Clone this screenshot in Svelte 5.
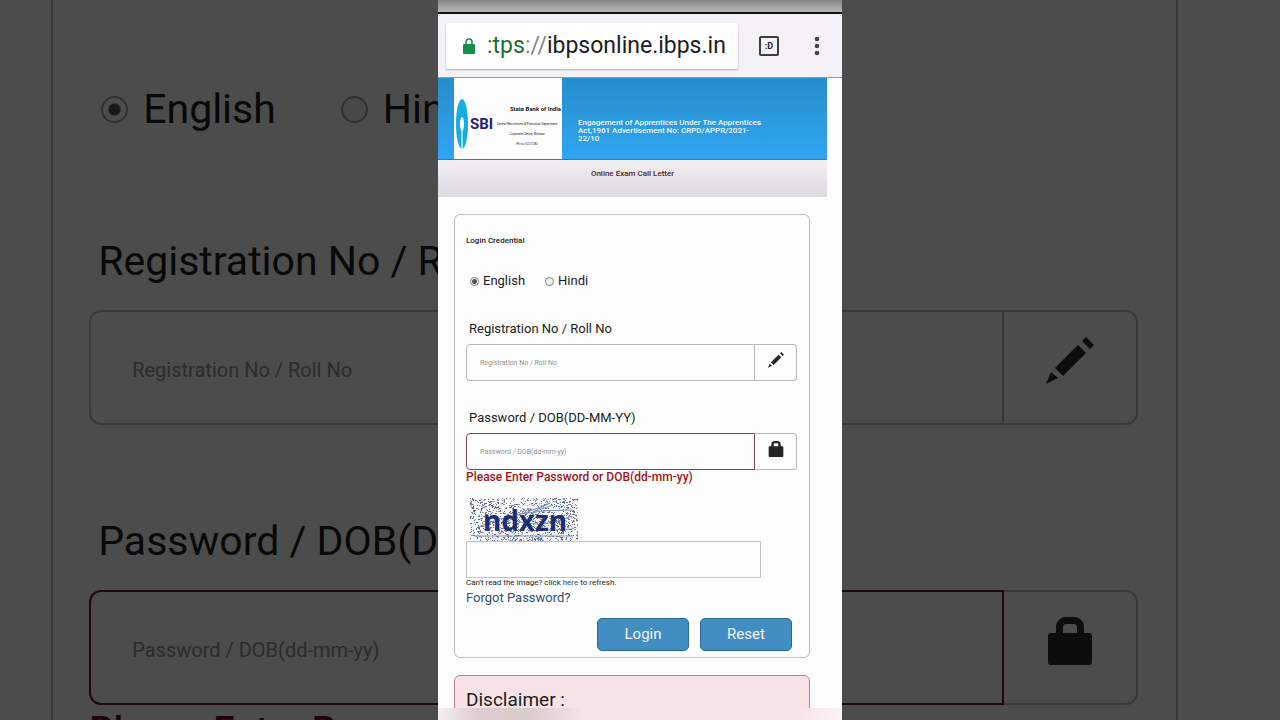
<script lang="ts">
	let language = $state('english');
	let backdropLanguage = $state('english');

	const fields = [
		{ id: 'reg', label: 'Registration No / Roll No', placeholder: 'Registration No / Roll No', icon: 'pencil', error: '' },
		{
			id: 'pass',
			label: 'Password / DOB(DD-MM-YY)',
			placeholder: 'Password / DOB(dd-mm-yy)',
			icon: 'lock',
			error: 'Please Enter Password or DOB(dd-mm-yy)'
		}
	];

	// captcha speckle, seeded so it is stable between renders
	let seed = 11;
	function rand() {
		seed = (seed * 16807) % 2147483647;
		return seed / 2147483647;
	}
	const shades = ['#5a658f', '#7c86a9', '#9aa1bd', '#6c7083'];
	const specks = Array.from({ length: 1100 }, () => ({
		x: Math.floor(rand() * 108),
		y: Math.floor(rand() * 43),
		w: rand() > 0.8 ? 2 : 1,
		fill: shades[Math.floor(rand() * 4)]
	}));
</script>

<svelte:head>
	<title>Online Exam Call Letter</title>
</svelte:head>

{#snippet icon(name: string)}
	{#if name === 'pencil'}
		<svg class="icon" viewBox="0 0 48 48" aria-hidden="true">
			<path d="M0 47 5 35 12 41zM9 31 32 8l8 8-23 23zM36 4l4-4 8 8-4 4z" />
		</svg>
	{:else}
		<svg class="icon" viewBox="0 0 48 48" aria-hidden="true">
			<path
				fill-rule="evenodd"
				d="M10 16V9q0-3 2-5l2-2q2-2 5-2h10q3 0 5 2l2 2q2 2 2 5v7h5q3 0 3 3v26q0 3-3 3H5q-3 0-3-3V19q0-3 3-3zM17 16h14v-5q0-4-3-4h-8q-3 0-3 4z"
			/>
		</svg>
	{/if}
{/snippet}

{#snippet fieldGroup(prefix: string)}
	{#each fields as field (field.id)}
		<div class="field" class:invalid={field.error}>
			<label for={prefix + field.id}>{field.label}</label>
			<div class="input-group">
				<input id={prefix + field.id} type="text" placeholder={field.placeholder} />
				<span class="addon">{@render icon(field.icon)}</span>
			</div>
			{#if field.error}
				<p class="error">{field.error}</p>
			{/if}
		</div>
	{/each}
{/snippet}

<div class="stage">
	<div class="backdrop" inert>
		<div class="backdrop-panel">
			<div class="languages">
				<label><input type="radio" name="bg-lang" value="english" bind:group={backdropLanguage} />English</label>
				<label><input type="radio" name="bg-lang" value="hindi" bind:group={backdropLanguage} />Hindi</label>
			</div>
			{@render fieldGroup('bg-')}
		</div>
	</div>

	<main class="phone">
		<div class="status"></div>
		<div class="toolbar">
			<div class="address">
				<svg class="secure" viewBox="0 0 12 16" aria-hidden="true">
					<path d="M3 7V4a3 3 0 0 1 6 0v3" fill="none" stroke="#12904a" stroke-width="1.5" />
					<rect y="6" width="12" height="10" rx="1" fill="#12904a" />
				</svg>
				<span class="url"><span class="scheme">:tps</span><span class="slashes">://</span>ibpsonline.ibps.in</span>
			</div>
			<button class="tabs" aria-label="Open tabs">:D</button>
			<button class="more" aria-label="More options">
				<svg viewBox="0 0 6 20" aria-hidden="true">
					<circle cx="3" cy="3" r="2.3" /><circle cx="3" cy="10" r="2.3" /><circle cx="3" cy="17" r="2.3" />
				</svg>
			</button>
		</div>

		<header class="banner">
			<div class="logo">
				<svg class="emblem" viewBox="0 0 12 50" aria-hidden="true">
					<ellipse cx="6" cy="25" rx="6" ry="25" fill="#16aee0" />
					<ellipse cx="6" cy="25" rx="2" ry="7" fill="#fff" />
					<path d="M5.4 25h1.2v25H5.4z" fill="#fff" />
				</svg>
				<span class="sbi">SBI</span>
				<div class="bank">
					<strong>State Bank of India</strong>
					<span>Central Recruitment &amp; Promotion Department</span>
					<span>Corporate Centre, Mumbai</span>
					<span>Ph no: 022-2282</span>
				</div>
			</div>
			<h1>Engagement of Apprentices Under The Apprentices Act,1961 Advertisement No: CRPD/APPR/2021-22/10</h1>
		</header>
		<h2>Online Exam Call Letter</h2>

		<form class="panel" onsubmit={(e) => e.preventDefault()}>
			<h3>Login Credential</h3>
			<div class="languages">
				<label><input type="radio" name="lang" value="english" bind:group={language} />English</label>
				<label><input type="radio" name="lang" value="hindi" bind:group={language} />Hindi</label>
			</div>
			{@render fieldGroup('')}
			<svg class="captcha" viewBox="0 0 108 43" role="img" aria-label="Captcha">
				<rect width="108" height="43" fill="#f8f8fb" />
				{#each specks as s}
					<rect x={s.x} y={s.y} width={s.w} height="1" fill={s.fill} />
				{/each}
				<path
					d="M4 38h99M55 15l25-10-17 9 20-7M8 29q40-18 95-17M58 33l45-2M40 21q30 12 62-3"
					fill="none"
					stroke="#7c90bd"
					stroke-width="1"
				/>
				<text x="55" y="33" text-anchor="middle">ndxzn</text>
			</svg>
			<input class="captcha-input" type="text" aria-label="Enter the characters in the image" />
			<p class="hint">Can't read the image? click <a href="#refresh">here</a> to refresh.</p>
			<a class="forgot" href="#forgot">Forgot Password?</a>
			<div class="actions">
				<button type="submit">Login</button>
				<button type="reset">Reset</button>
			</div>
		</form>

		<section class="disclaimer">
			<h2>Disclaimer :</h2>
		</section>
		<div class="page-edge"></div>
	</main>
</div>

<style>
	:global(body) {
		background: #4c4c4c;
		font-family: Roboto, 'Liberation Sans', sans-serif;
	}

	.stage,
	.stage * {
		box-sizing: border-box;
	}

	.stage {
		position: relative;
		height: 100vh;
		overflow: hidden;
	}

	h1,
	h2,
	h3,
	p {
		margin: 0;
	}

	button,
	input {
		font-family: inherit;
	}

	.icon {
		display: block;
		width: 16px;
		height: 16px;
		fill: #252525;
	}

	/* shared form pieces */
	.languages {
		display: flex;
		gap: 20px;
		margin: 27px 0 32px 4px;
		font-size: 13px;
		line-height: 16px;
	}

	.languages label {
		display: flex;
		align-items: center;
		gap: 4px;
	}

	.languages input {
		appearance: none;
		width: 9px;
		height: 9px;
		margin: 0;
		border: 1px solid #858585;
		border-radius: 50%;
		background: #eeeef0;
	}

	.languages input:checked {
		background: radial-gradient(circle, #555 0 2px, #f5f5f5 3px);
	}

	.field + .field {
		margin-top: 29px;
	}

	.field label {
		display: block;
		margin: 0 0 7px 3px;
		font-size: 13px;
		line-height: 16px;
	}

	.input-group {
		display: flex;
		height: 37px;
	}

	.input-group input {
		flex: 1;
		min-width: 0;
		padding: 0 13px;
		border: 1px solid #b7b7b9;
		border-radius: 4px 0 0 4px;
		background: transparent;
		font-size: 7px;
		outline: 0;
	}

	.input-group input::placeholder {
		color: #929292;
	}

	.invalid .input-group input {
		border-color: #784651;
	}

	.addon {
		display: flex;
		justify-content: center;
		width: 42px;
		padding-top: 7px;
		border: 1px solid #b7b7b9;
		border-left: 0;
		border-radius: 0 4px 4px 0;
	}

	.error {
		color: #9c161b;
		font-size: 12px;
		font-weight: 500;
		line-height: 15px;
	}

	/* dimmed enlargement behind the phone */
	.backdrop {
		position: absolute;
		inset: 0;
		overflow: hidden;
		color: #080808;
	}

	.backdrop-panel {
		min-height: 100%;
		margin: 0 8% 0 4%;
		padding: 84px 38px 0 36px;
		border: solid #393939;
		border-width: 0 2px;
	}

	.backdrop .languages {
		gap: 65px;
		margin: 0 0 102px 12px;
		font-size: 41px;
		line-height: 50px;
	}

	.backdrop .languages label {
		gap: 15px;
	}

	.backdrop .languages input {
		width: 27px;
		height: 27px;
		border: 2px solid #303030;
		background: #484848;
	}

	.backdrop .languages input:checked {
		background: radial-gradient(circle, #181818 0 5px, #4c4c4c 7px);
	}

	.backdrop .field + .field {
		margin-top: 91px;
	}

	.backdrop .field label {
		margin: 0 0 24px 9px;
		font-size: 41px;
		line-height: 50px;
	}

	.backdrop .input-group {
		height: 115px;
	}

	.backdrop .input-group input {
		padding: 4px 41px 0;
		border: 2px solid #393939;
		border-radius: 12px 0 0 12px;
		font-size: 20px;
	}

	.backdrop .input-group input::placeholder {
		color: #2b2b2b;
	}

	.backdrop .invalid .input-group input {
		border-color: #1c090d;
	}

	.backdrop .addon {
		width: 134px;
		padding-top: 25px;
		border: 2px solid #393939;
		border-left: 0;
		border-radius: 0 12px 12px 0;
	}

	.backdrop .icon {
		width: 48px;
		height: 48px;
		fill: #0d0d0d;
	}

	.backdrop .error {
		color: #1e0407;
		font-size: 38px;
		line-height: 52px;
	}

	/* phone */
	.phone {
		position: relative;
		width: 100%;
		max-width: 404px;
		height: 100%;
		margin: 0 auto;
		overflow: hidden;
		background: #fdfdfd;
		color: #1c1c1c;
	}

	.status {
		height: 14px;
		border-bottom: 2px solid #111;
		background: linear-gradient(#858585, #b9b9b9);
	}

	.toolbar {
		display: flex;
		align-items: center;
		height: 64px;
		padding: 0 16px 0 8px;
		border-bottom: 1px solid #999;
		background: #f4f2f6;
	}

	.address {
		display: flex;
		flex: 1;
		align-items: center;
		gap: 12px;
		height: 46px;
		padding: 0 8px 0 17px;
		border-radius: 2px;
		background: #fefefe;
		box-shadow: 0 1px 2px #aaa;
	}

	.secure {
		width: 12px;
		height: 16px;
	}

	.url {
		font-size: 23px;
		white-space: nowrap;
	}

	.scheme {
		color: #1a7137;
	}

	.slashes {
		color: #858585;
	}

	.tabs {
		width: 20px;
		height: 20px;
		margin-left: 21px;
		padding: 0;
		border: 2px solid #3c3c3f;
		border-radius: 2px;
		background: none;
		color: #222;
		font-size: 9px;
		font-weight: 700;
	}

	.more {
		width: 18px;
		height: 24px;
		margin-left: 29px;
		padding: 0;
		border: 0;
		background: none;
	}

	.more svg {
		display: block;
		height: 20px;
		margin: 0 auto;
		fill: #444;
	}

	.banner {
		display: flex;
		gap: 16px;
		height: 82px;
		margin-right: 15px;
		padding-left: 16px;
		border-bottom: 1px solid #2783bd;
		background: linear-gradient(#278dcb, #30a6f2);
	}

	.logo {
		display: flex;
		flex: none;
		align-items: center;
		width: 108px;
		padding: 10px 1px 0 2px;
		background: #fdfdfd;
	}

	.emblem {
		width: 12px;
		height: 50px;
	}

	.sbi {
		margin-left: 2px;
		color: #26226b;
		font-size: 15px;
		font-weight: 700;
	}

	.bank {
		display: flex;
		flex: 1;
		flex-direction: column;
		align-items: flex-end;
		color: #222;
		font-size: 3px;
		line-height: 10px;
		white-space: nowrap;
	}

	.bank strong {
		font-size: 6px;
		line-height: 20px;
	}

	.bank span {
		align-self: center;
	}

	.banner h1 {
		width: 184px;
		margin-top: 41px;
		color: #f2f8fc;
		font-size: 8px;
		font-weight: 500;
		line-height: 8px;
	}

	.phone > h2 {
		height: 37px;
		margin-right: 15px;
		padding-top: 9px;
		background: linear-gradient(#f1eff2, #dddbe0);
		color: #5b2225;
		font-size: 8px;
		font-weight: 500;
		line-height: 10px;
		text-align: center;
	}

	.panel {
		margin: 17px 32px 0 16px;
		padding: 21px 12px 6px 11px;
		border: 1px solid #bebebe;
		border-radius: 6px;
	}

	h3 {
		font-size: 8px;
		font-weight: 500;
		line-height: 10px;
	}

	.captcha {
		display: block;
		width: 108px;
		height: 43px;
		margin: 13px 0 0 4px;
	}

	.captcha text {
		fill: #1c2f72;
		font-family: 'Noto Sans', sans-serif;
		font-size: 28px;
		font-weight: 700;
	}

	.captcha-input {
		display: block;
		width: 295px;
		max-width: 100%;
		height: 37px;
		padding: 0 8px;
		border: 1px solid #c2c2c4;
		background: transparent;
	}

	.hint {
		font-size: 8px;
		line-height: 10px;
	}

	.hint a,
	.forgot {
		color: #2d526f;
		text-decoration: none;
	}

	.forgot {
		display: block;
		margin-top: 2px;
		font-size: 13px;
		line-height: 16px;
	}

	.actions {
		display: flex;
		justify-content: flex-end;
		gap: 11px;
		margin: 12px 5px 0 0;
	}

	.actions button {
		width: 92px;
		height: 33px;
		padding: 0 0 2px;
		border: 1px solid #2b6a96;
		border-radius: 5px;
		background: #428dc1;
		color: #f3f8fb;
		font-size: 15px;
	}

	.disclaimer {
		min-height: 120px;
		margin: 17px 32px 0 16px;
		padding: 12px 11px;
		border: 1px solid #bd7f88;
		border-radius: 6px;
		background: #f5e3e5;
	}

	.disclaimer h2 {
		font-size: 19px;
		font-weight: 400;
		line-height: 24px;
	}

	/* soft strip over the cut-off bottom of the page */
	.page-edge {
		position: absolute;
		inset: auto 0 0;
		height: 12px;
		background: linear-gradient(90deg, #f6edef, #ddcdd0 10%, #d9cacc 22%, #f5e3e5 36%, #f5e3e5 88%, #fbf3f5);
	}
</style>
